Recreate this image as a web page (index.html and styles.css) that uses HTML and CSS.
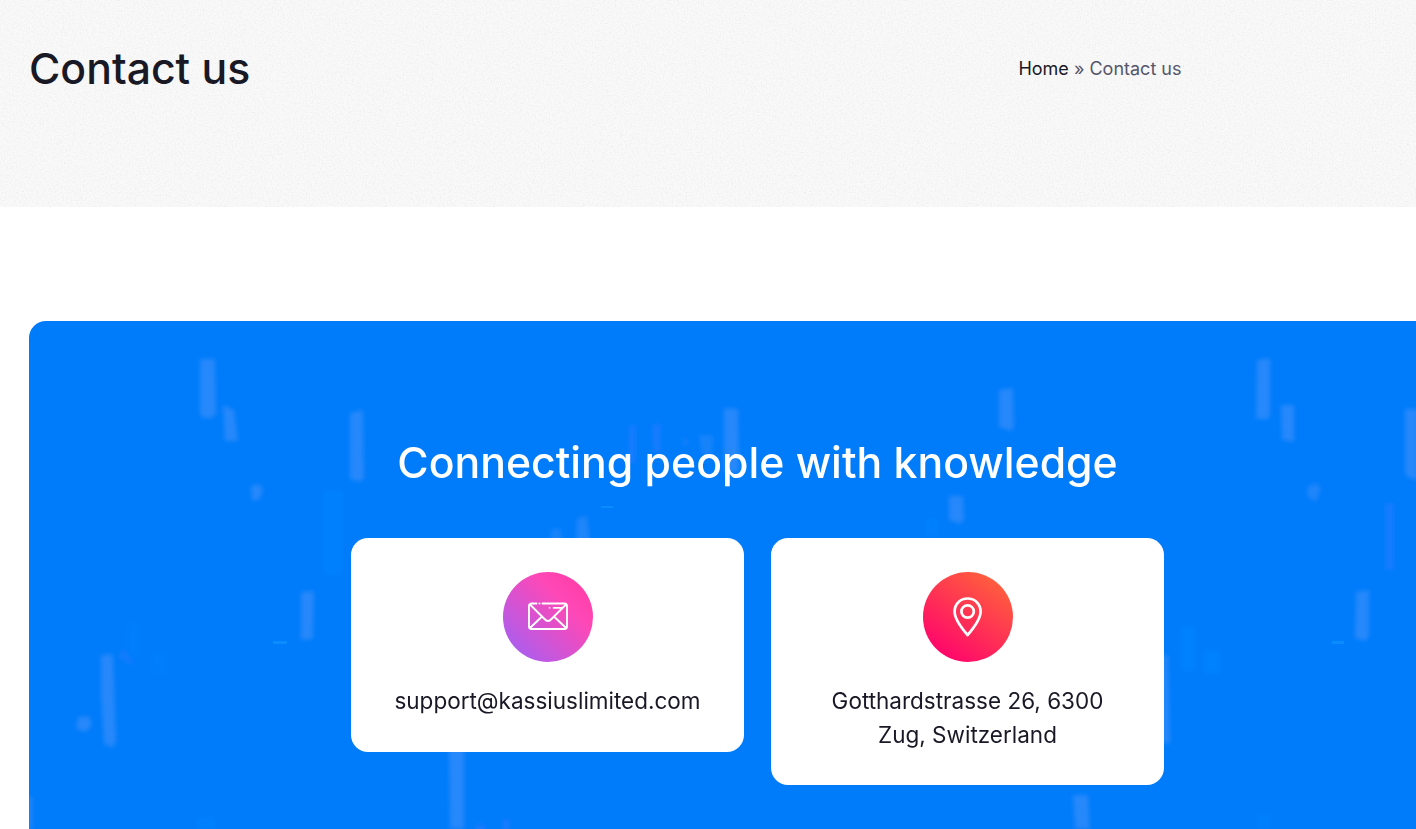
FILE: index.html
```html
<!DOCTYPE html>
<html lang="en">
<head>
<meta charset="utf-8">
<title>Contact us</title>
<link rel="stylesheet" href="styles.css">
</head>
<body>
<header class="page-header">
  <svg class="grain" aria-hidden="true">
    <filter id="noise" x="0" y="0" width="100%" height="100%">
      <feTurbulence type="fractalNoise" baseFrequency="0.65" numOctaves="3" seed="4"/>
      <feColorMatrix values="0 0 0 0 0  0 0 0 0 0  0 0 0 0 0  0.1 0 0 0 -0.043"/>
    </filter>
    <rect width="100%" height="100%" filter="url(#noise)"/>
  </svg>
  <h1 class="page-title">Contact us</h1>
  <nav class="breadcrumb"><a class="breadcrumb-home" href="#">Home</a> » Contact us</nav>
</header>
<main class="content">
  <section class="panel">
    <svg class="candles" viewBox="29 321 1457 540" width="1457" height="540" aria-hidden="true">
      <defs><filter id="soft" x="-50%" y="-20%" width="200%" height="140%"><feGaussianBlur stdDeviation="1.9"/></filter></defs>
      <g filter="url(#soft)" fill="#2588fa">
        <path d="M200 359h15l1 55-4 4h-9l-3-4z"/>
        <path d="M223 405l11 5 4 31h-13z"/>
        <path d="M350 413l13-3 1 68-4 4-10-3z"/>
        <path d="M251 486l8-2 4 5-3 10-8 2z"/>
        <path d="M301 592l13-1-1 48-12 1z"/>
        <path d="M101 655l12-1 3 87-3 7-9-4-3-50z"/>
        <path d="M78 717l11-1 3 9-6 7-10-3z"/>
        <path d="M28 797h4v32h-4z"/>
        <path d="M449 745h15v84h-14z"/>
        <path d="M724 408l14 1 1 63h-15z"/>
        <path d="M699 435h14l-1 20h-10z" opacity=".6"/>
        <path d="M683 438l6 1v7h-8z" opacity=".35"/>
        <path d="M577 518l10-2 3 26h-14z" opacity=".8"/>
        <path d="M551 530l9-2 3 14h-13z" opacity=".65"/>
        <path d="M999 390l14-2 1 39-3 4-12-4z"/>
        <path d="M949 496h14l1 24-4 4-11-4z"/>
        <path d="M1257 360l13-2v57l-2 4h-12z"/>
        <path d="M1281 405h13v37l-12-2z"/>
        <path d="M1405 409h13v71l-9-2-4-5z"/>
        <path d="M1307 487l9-4 5 5-5 14-8-5z" opacity=".8"/>
        <path d="M1356 592l13-2v46l-4 5-10-3z"/>
        <path d="M1162 654l6 2 2 87h-8z"/>
        <path d="M1073 795h15l2 34h-15z"/>
      </g>
      <g filter="url(#soft)" fill="#197cff">
        <path d="M629 425h7v38h-8z"/>
        <path d="M652 424h9v28h-8z"/>
        <path d="M1385 503h9v67h-9z"/>
        <path d="M124 648l7 9 2 9-16-9z" opacity=".7"/>
        <path d="M475 824h10v8h-10zM502 819h8v12h-8z"/>
      </g>
      <g filter="url(#soft)" fill="#0385ff">
        <path d="M323 490h20v85h-20z" opacity=".45"/>
        <path d="M126 622h14v35h-14zM150 652h18v22h-18z" opacity=".35"/>
        <path d="M1181 626h14v45h-14zM1204 650h16v24h-16z" opacity=".55"/>
        <path d="M1257 815h14v14h-14zM196 817h20v12h-20zM925 518h14v18h-14z" opacity=".4"/>
      </g>
      <g fill="#088cff"><path d="M273 641h14v3h-14zM601 506h12v2h-12zM1332 641h12v3h-12z"/></g>
    </svg>
    <h2 class="panel-title">Connecting people with knowledge</h2>
    <div class="cards">
      <article class="card">
        <div class="badge badge-mail">
          <svg width="40" height="30" viewBox="0 0 40 30" fill="none" stroke="#fff" stroke-width="1.9" stroke-linecap="round" stroke-linejoin="round">
            <path d="M8.500 1.500H3.500Q1 1.500 1 4V24.500Q1 27 3.500 27H36.500Q39 27 39 24.500V4Q39 1.500 36.500 1.500H14.500M11.400 1.500h.2"/>
            <path d="M2 2.500L16.500 17Q20 21 23.500 17L38 2.500M2 26L13.500 15M38 26L26.500 15"/>
            <path d="M25.500 5.800H34M21.500 5.800h.1" stroke-width="1.700"/>
          </svg>
        </div>
        <p class="card-text">support@kassiuslimited.com</p>
      </article>
      <article class="card">
        <div class="badge badge-pin">
          <svg width="30" height="41" viewBox="0 0 30 41" fill="none" stroke="#fff" stroke-width="2.700" stroke-linejoin="round">
            <path d="M14.600 1.500C7.300 1.500 1.600 7 1.600 14.500C1.600 22 7.600 30 14.600 38C21.600 30 27.600 22 27.600 14.500C27.600 7 21.900 1.500 14.600 1.500Z"/>
            <circle cx="14.600" cy="14.500" r="6.200"/>
          </svg>
        </div>
        <p class="card-text">Gotthardstrasse 26, 6300<br>Zug, Switzerland</p>
      </article>
    </div>
  </section>
</main>
</body>
</html>
```
FILE: styles.css
```css
* { box-sizing: border-box; }
html, body { height: 100%; overflow: hidden; }
body {
  margin: 0;
  background: #fff;
  color: #191825;
  font-family: Inter, "Liberation Sans", sans-serif;
}
h1, h2, p { margin: 0; font-weight: 500; }
.page-header {
  position: relative;
  display: flex;
  justify-content: space-between;
  align-items: flex-start;
  height: 207px;
  padding: 42px 234.5px 0 29px;
  background: #f9f9f9;
}
.grain { position: absolute; inset: 0; width: 100%; height: 100%; }
.page-title {
  position: relative;
  font-size: 42.75px;
  line-height: 54px;
  font-weight: 500;
}
.breadcrumb {
  position: relative;
  padding-top: 12px;
  font-size: 18px;
  line-height: 30px;
  color: #55566b;
  white-space: nowrap;
}
.breadcrumb-home { color: #191825; text-decoration: none; }
.content { padding: 114px 0 0 29px; }
.panel {
  position: relative;
  width: 1457px;
  height: 540px;
  padding-top: 115px;
  border-radius: 17px;
  background: #007cfa;
  overflow: hidden;
}
.candles { position: absolute; top: 0; left: 0; }
.panel-title {
  position: relative;
  color: #fff;
  font-size: 42.75px;
  line-height: 54px;
  text-align: center;
}
.cards {
  position: relative;
  display: flex;
  justify-content: center;
  align-items: flex-start;
  gap: 27px;
  margin-top: 48px;
}
.card {
  display: flex;
  flex-direction: column;
  align-items: center;
  width: 393px;
  padding: 34px 20px;
  border-radius: 17px;
  background: #fff;
}
.badge {
  display: grid;
  place-items: center;
  width: 90px;
  height: 90px;
  margin-bottom: 22px;
  border-radius: 50%;
}
.badge-mail { background: linear-gradient(45deg, #9a62fa 0%, #ff48b6 68%, #ff38a0 100%); }
.badge-pin { background: linear-gradient(35deg, #ff006e 8%, #ff643a 92%); }
.card-text {
  font-size: 22.5px;
  line-height: 33.5px;
  font-weight: 400;
  text-align: center;
}
```
